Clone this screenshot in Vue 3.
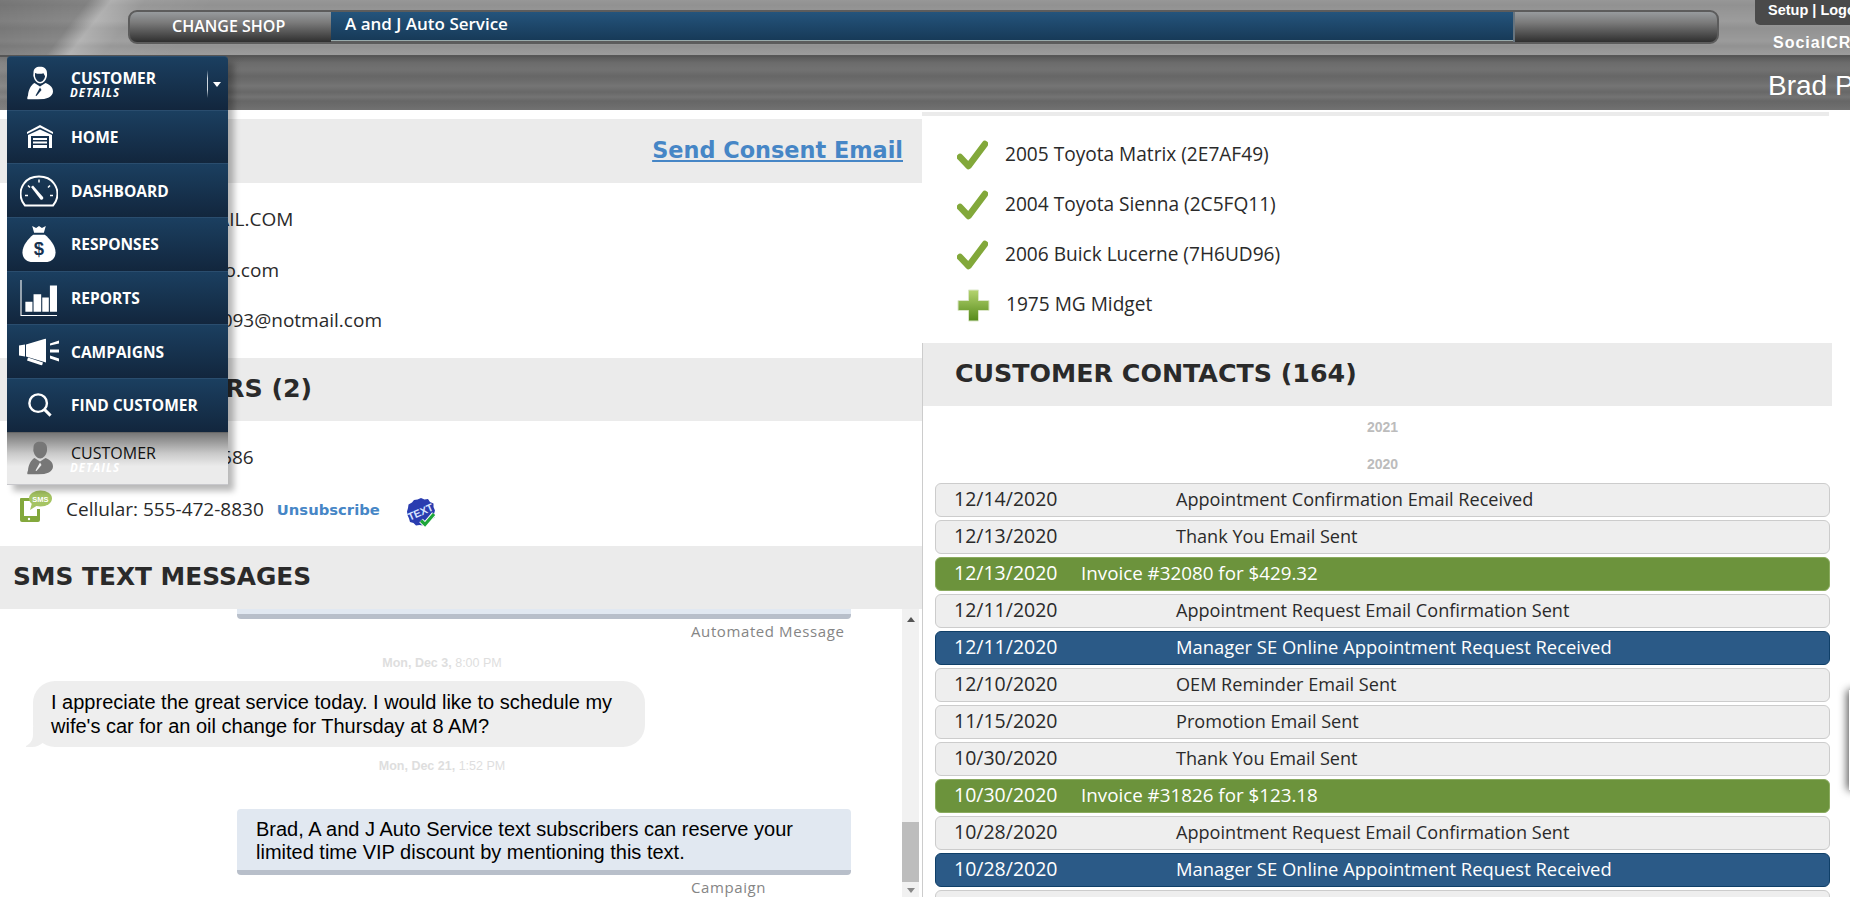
<script setup>
const menu = [
  { key: 'home', label: 'HOME' },
  { key: 'dash', label: 'DASHBOARD' },
  { key: 'bag', label: 'RESPONSES' },
  { key: 'chart', label: 'REPORTS' },
  { key: 'mega', label: 'CAMPAIGNS' },
  { key: 'find', label: 'FIND CUSTOMER' }
]
const emails = ['BRADPITT.8@GMAIL.COM', 'bradpitt.55@yahoo.com', 'bradleypitti12345093@notmail.com']
const vehicles = ['2005 Toyota Matrix (2E7AF49)', '2004 Toyota Sienna (2C5FQ11)', '2006 Buick Lucerne (7H6UD96)']
const contacts = [
  ['12/14/2020', 'Appointment Confirmation Email Received', ''],
  ['12/13/2020', 'Thank You Email Sent', ''],
  ['12/13/2020', 'Invoice #32080 for $429.32', 'green'],
  ['12/11/2020', 'Appointment Request Email Confirmation Sent', ''],
  ['12/11/2020', 'Manager SE Online Appointment Request Received', 'blue'],
  ['12/10/2020', 'OEM Reminder Email Sent', ''],
  ['11/15/2020', 'Promotion Email Sent', ''],
  ['10/30/2020', 'Thank You Email Sent', ''],
  ['10/30/2020', 'Invoice #31826 for $123.18', 'green'],
  ['10/28/2020', 'Appointment Request Email Confirmation Sent', ''],
  ['10/28/2020', 'Manager SE Online Appointment Request Received', 'blue'],
  ['10/27/2020', 'Thank You Email Sent', '']
]
</script>

<template>
  <div class="page">
    <header class="header">
      <div class="top-band">
        <div class="bar">
          <div class="shop-btn">CHANGE SHOP</div>
          <div class="shop-name">A and J Auto Service</div>
          <div class="bar-end"></div>
        </div>
        <div class="account">
          <div class="tab">Setup | Logout</div>
          <div class="brand">SocialCRM</div>
        </div>
      </div>
      <div class="low-band">Brad Pitt</div>
    </header>

    <main class="main">
      <section class="left">
        <div class="sec-head consent"><a class="consent-link">Send Consent Email</a></div>
        <div class="emails">
          <div v-for="e in emails" :key="e" class="email">{{ e }}</div>
        </div>
        <div class="sec-head title">PHONE NUMBERS (2)</div>
        <div class="phones">
          <div class="phone">Phone: 555-472-5686</div>
          <div class="phone cell">
            <svg class="sms-icon" viewBox="0 0 33 32">
              <path d="M2 8h12v3H5v15h13v-7h3v11a2 2 0 0 1-2 2H3a2 2 0 0 1-2-2V9a1 1 0 0 1 1-1z" fill="#83a83c"/>
              <circle cx="10" cy="29" r="1.2" fill="#fff"/>
              <ellipse cx="21.5" cy="8.5" rx="11.5" ry="8" fill="#a5c463"/>
              <path d="M13 13l-2 7 8-5z" fill="#a5c463"/>
              <text x="21.5" y="11.5" class="sms-txt" text-anchor="middle">SMS</text>
            </svg>
            <span>Cellular: 555-472-8830</span>
            <a class="unsub">Unsubscribe</a>
            <svg class="badge-icon" viewBox="0 0 30 30">
              <path d="M15 1l3.500 1.500L22 2l2 3 3.500 1.500L27.500 10l1.500 3.500-1 3.500.5 3.500-3 2-2 3-3.500 0L17 28.500l-3.500-.5-3.500.5-2.500-2.500-3.500-1-1-3.500L1.500 18 1 14.500 2 11l.5-3.500L6 5.500 8 3l3.500-.5z" fill="#2a3db0"/>
              <text x="14.500" y="18.500" class="badge-txt" text-anchor="middle" transform="rotate(-24 15 15)">TEXT</text>
              <path d="M15 23.500l4 4 9-10.500" fill="none" stroke="#fff" stroke-width="5"/>
              <path d="M15 23.500l4 4 9-10.500" fill="none" stroke="#1ea53a" stroke-width="3.200"/>
            </svg>
          </div>
        </div>
        <div class="sec-head title sms">SMS TEXT MESSAGES</div>
        <div class="chat-wrap">
          <div class="chat">
            <div class="stub"></div>
            <div class="label first">Automated Message</div>
            <div class="stamp s1"><b>Mon, Dec 3,</b> 8:00 PM</div>
            <div class="bubble-in">I appreciate the great service today. I would like to schedule my wife's car for an oil change for Thursday at 8 AM?</div>
            <div class="stamp s2"><b>Mon, Dec 21,</b> 1:52 PM</div>
            <div class="bubble-out">Brad, A and J Auto Service text subscribers can reserve your limited time VIP discount by mentioning this text.</div>
            <div class="label last">Campaign</div>
          </div>
          <div class="scrollbar">
            <span class="arrow up"></span>
            <span class="track"></span>
            <span class="thumb"></span>
            <span class="arrow down"></span>
          </div>
        </div>
      </section>

      <section class="right">
        <div class="strip"></div>
        <div class="vehicles">
          <div v-for="v in vehicles" :key="v" class="vehicle">
            <svg class="check" viewBox="0 0 31 30"><path d="M3 17l8.500 9L28 4" fill="none" stroke="#82a83a" stroke-width="6.500" stroke-linecap="round" stroke-linejoin="round"/></svg>
            <span class="v-name">{{ v }}</span>
          </div>
          <div class="vehicle">
            <svg class="plus" viewBox="0 0 33 33">
              <defs><linearGradient id="pg" x1="0" y1="0" x2="0" y2="1"><stop offset="0" stop-color="#b5d470"/><stop offset="1" stop-color="#558a1a"/></linearGradient></defs>
              <path d="M11.500 1h10v10.500H32v10H21.500V32h-10V21.500H1v-10h10.500z" fill="url(#pg)" stroke="#dbe6c8"/>
            </svg>
            <span class="v-name">1975 MG Midget</span>
          </div>
        </div>
        <div class="contacts">
          <div class="sec-head title contacts-title">CUSTOMER CONTACTS (164)</div>
          <div class="year y1">2021</div>
          <div class="year">2020</div>
          <div class="rows">
            <div v-for="(c, i) in contacts" :key="i" class="row" :class="c[2]">
              <span class="date">{{ c[0] }}</span>
              <span class="desc">{{ c[1] }}</span>
            </div>
          </div>
        </div>
      </section>
    </main>

    <nav class="menu">
      <div class="item customer">
        <svg class="ico person" viewBox="0 0 26 33">
          <path d="M13 0c4 0 7 2.500 7 6.500 0 1.500.3 2.500-.3 4-.8 3.500-3.500 6.500-6.500 6.500s-5.700-3-6.500-6.500C6 9 6.500 7.500 6.500 6 6.500 2.500 9 0 13 0z" fill="#fff"/>
          <path d="M8 6.500c2 1 6 1.200 8.500.3l1.600 3c-.5 3-2.700 5.700-5 5.700s-4.500-2.700-5.100-5.700z" fill="#17324f"/>
          <path d="M7.500 16.500L13 20l5.500-3.500C22 18 26 20 26 25c0 5-6 8-15 8H1c-1 0-1-2 0-4 .5-6 3-10.500 6.500-12.500z" fill="#fff"/>
          <path d="M13 21l1.500 2.500-5 6-1-.5z" fill="#17324f"/>
        </svg>
        <div class="cust-text"><span>CUSTOMER</span><em>DETAILS</em></div>
        <span class="sep"></span>
        <span class="caret"></span>
      </div>
      <div v-for="m in menu" :key="m.key" class="item">
        <svg v-if="m.key === 'home'" class="ico" viewBox="0 0 26 24">
          <path d="M13 0L26 7v2L13 2.500 0 9V7z" fill="#fff"/>
          <path d="M1 10l12-5.500L25 10v13h-3V11H4v12H1z" fill="#fff"/>
          <path d="M6 13h14v2H6zM6 16.500h14v2H6zM6 20h14v3H6z" fill="#fff"/>
        </svg>
        <svg v-else-if="m.key === 'dash'" class="ico wide" viewBox="0 0 38 33">
          <path d="M5 31h28C39 24 38.500 15 34 9 30.500 4 25 2 19 2S7.500 4 4 9C-.5 15-1 24 5 31z" fill="none" stroke="#fff" stroke-width="2"/>
          <path d="M11 12.500l2-1.500 10 11.500c1 1.500-.5 3.500-2.500 2.500z" fill="#fff"/>
          <path d="M19 5v3M8 11l2 2M30 11l-2 2M5 21h3M30 21h3" stroke="#fff" stroke-width="1.500"/>
        </svg>
        <svg v-else-if="m.key === 'bag'" class="ico wide" viewBox="0 0 34 37">
          <path d="M10 0l4 2 3-2 3 2 4-2-2 7h-10z" fill="#fff"/>
          <path d="M11 9h12c5 4 11 11 11 18 0 7-5 10-10 10H10C5 37 0 34 0 27 0 20 6 13 11 9z" fill="#fff"/>
          <text x="17" y="30" class="dollar" text-anchor="middle">$</text>
        </svg>
        <svg v-else-if="m.key === 'chart'" class="ico wide" viewBox="0 0 34 33">
          <path d="M.5 0v32.500h33" fill="none" stroke="#fff" stroke-width="1"/>
          <path d="M4.500 20h6.500v9H4.500zM12 13h7v16h-7zM20 16h6v13h-6zM27 5h6.500v24H27z" fill="#fff"/>
        </svg>
        <svg v-else-if="m.key === 'mega'" class="ico mega" viewBox="0 0 42 27">
          <path d="M0 7l6-1v12l-6-1zM7 6l20-6v24L7 18z" fill="#fff"/>
          <path d="M9 19l15 5-1 3-15-5z" fill="#fff"/>
          <path d="M31 5l9-3v3l-9 2zM31 11h9v3h-9zM31 17l9 3v3l-9-3z" fill="#fff"/>
        </svg>
        <svg v-else class="ico" viewBox="0 0 26 26">
          <circle cx="11" cy="11" r="9.500" fill="none" stroke="#fff" stroke-width="2.600"/>
          <path d="M18 18l6.500 6.500" stroke="#fff" stroke-width="3.200"/>
        </svg>
        <span class="item-label">{{ m.label }}</span>
      </div>
      <div class="item active">
        <svg class="ico person" viewBox="0 0 26 33">
          <path d="M13 0c4 0 7 2.500 7 6.500 0 1.500.3 2.500-.3 4-.8 3.500-3.500 6.500-6.500 6.500s-5.700-3-6.500-6.500C6 9 6.500 7.500 6.500 6 6.500 2.500 9 0 13 0z" fill="#777"/>
          <path d="M7.500 16.500L13 20l5.500-3.500C22 18 26 20 26 25c0 5-6 8-15 8H1c-1 0-1-2 0-4 .5-6 3-10.500 6.500-12.500z" fill="#777"/>
          <path d="M13 21l1.500 2.500-5 6-1-.5z" fill="#eee"/>
        </svg>
        <div class="cust-text"><span>CUSTOMER</span><em>DETAILS</em></div>
      </div>
    </nav>

    <div class="edge-tab"></div>
  </div>
</template>

<style scoped>
.page {
  position: relative;
  width: 1850px;
  height: 897px;
  overflow: hidden;
  background: #fff;
  font-family: "Open Sans", sans-serif;
  color: #2a2a2a;
}

/* Header */
.header {
  height: 110px;
  display: flex;
  flex-direction: column;
}
.top-band {
  height: 57px;
  display: flex;
  align-items: flex-start;
  padding-left: 128px;
  box-sizing: border-box;
  border-bottom: 2px solid #565656;
  background:
    linear-gradient(128deg, rgba(0,0,0,.2) 0, rgba(0,0,0,.12) 70px, rgba(255,255,255,.25) 88px, rgba(255,255,255,.06) 115px, transparent 170px) 0 0 / 400px 57px no-repeat,
    linear-gradient(0deg, rgba(255,255,255,.05), transparent 5px, rgba(0,0,0,.04) 9px, rgba(255,255,255,.04) 14px, transparent 19px, rgba(0,0,0,.04) 27px, rgba(255,255,255,.05) 34px, transparent 42px, rgba(0,0,0,.04) 50px, transparent),
    #979797;
}
.low-band {
  height: 53px;
  box-sizing: border-box;
  padding: 7px 0 0 1768px;
  white-space: nowrap;
  overflow: hidden;
  font: 28px/44px "Liberation Sans", sans-serif;
  color: #fff;
  background:
    linear-gradient(128deg, rgba(255,255,255,.18) 0, rgba(255,255,255,.08) 50px, rgba(0,0,0,.1) 75px, transparent 200px) 0 0 / 400px 53px no-repeat,
    linear-gradient(#5a5a5a, transparent 6px),
    linear-gradient(0deg, rgba(255,255,255,.04), transparent 4px, rgba(0,0,0,.05) 9px, rgba(255,255,255,.05) 13px, rgba(0,0,0,.04) 18px, rgba(255,255,255,.06) 24px, transparent 29px, rgba(0,0,0,.05) 34px, rgba(255,255,255,.04) 40px, transparent 47px),
    #6c6c6c;
}
.bar {
  width: 1591px;
  height: 34px;
  margin-top: 10px;
  flex: none;
  display: flex;
  box-sizing: border-box;
  border: 2px solid #5c5c5c;
  border-radius: 9px;
  overflow: hidden;
  background: #5c5c5c;
}
.shop-btn {
  width: 201px;
  flex: none;
  box-sizing: border-box;
  padding-left: 42px;
  font: 600 16px/28px "Open Sans", sans-serif;
  color: #fff;
  background: linear-gradient(#979b9e, #7b7b7b 35%, #2f2f2f);
}
.shop-name {
  width: 1182px;
  flex: none;
  box-sizing: border-box;
  padding-left: 14px;
  height: 29px;
  font: 600 17px/24px "Open Sans", sans-serif;
  color: #fff;
  background: linear-gradient(#24547c, #173a58);
  border-bottom: 1px solid #9aa;
}
.bar-end {
  flex: 1;
  border-left: 2px solid #67747e;
  background: linear-gradient(#979b9e, #7b7b7b 35%, #2f2f2f);
}
.account {
  margin-left: 36px;
  width: 95px;
  flex: none;
  overflow: hidden;
  white-space: nowrap;
}
.tab {
  height: 25px;
  box-sizing: border-box;
  padding-left: 13px;
  background: #4a4a4a;
  border-bottom-left-radius: 5px;
  font: bold 14.500px/20px "Liberation Sans", sans-serif;
  color: #fff;
}
.brand {
  padding: 9px 0 0 18px;
  font: bold 16px/18px "Liberation Sans", sans-serif;
  letter-spacing: 1px;
  color: #fff;
}

/* Layout */
.main {
  display: grid;
  grid-template-columns: 922px 928px;
  height: 787px;
}
.left {
  padding-top: 9px;
  min-width: 0;
}
.right {
  padding-top: 2px;
  min-width: 0;
}

/* Sections */
.sec-head {
  background: #ebebeb;
  height: 63px;
  box-sizing: border-box;
}
.consent {
  height: 64px;
  padding: 16px 19px 0 0;
  text-align: right;
}
.consent-link {
  font: bold 22.400px/30px "DejaVu Sans", sans-serif;
  color: #4686c6;
  text-decoration: underline;
}
.title {
  padding-left: 13px;
  font: bold 25.300px/62px "DejaVu Sans", sans-serif;
  color: #2a2a2a;
  white-space: nowrap;
}
.sms {
  font-size: 24.800px;
}
.emails {
  height: 175px;
  box-sizing: border-box;
  padding: 11px 0 0 66px;
  white-space: nowrap;
}
.email {
  height: 50.500px;
  font-size: 19px;
  line-height: 50px;
}
.phones {
  height: 125px;
  box-sizing: border-box;
  padding: 10px 0 0 66px;
}
.phone {
  height: 52px;
  font-size: 19px;
  line-height: 52px;
  position: relative;
  white-space: nowrap;
}
.cell {
  display: flex;
  align-items: center;
}
.sms-icon {
  position: absolute;
  left: -47px;
  top: 7px;
  width: 33px;
  height: 32px;
}
.sms-txt {
  font: bold 7.500px "Liberation Sans", sans-serif;
  fill: #fff;
}
.unsub {
  margin-left: 13px;
  font: bold 14.800px "DejaVu Sans", sans-serif;
  color: #4686c6;
}
.badge-icon {
  width: 30px;
  height: 30px;
  margin-left: 26px;
  margin-top: 5px;
}
.badge-txt {
  font: bold 10.500px "Liberation Sans", sans-serif;
  fill: #d8e4ff;
}

/* Chat */
.chat-wrap {
  display: flex;
  height: 288px;
  overflow: hidden;
}
.chat {
  flex: 1;
  min-width: 0;
  font-family: "Liberation Sans", sans-serif;
}
.stub {
  margin-left: 237px;
  width: 614px;
  height: 5px;
  background: #e1e8f1;
  border-bottom: 5px solid #b8bfca;
  border-radius: 0 0 4px 4px;
}
.label {
  height: 20px;
  margin-left: 691px;
  font: 15px/20px "Open Sans", sans-serif;
  letter-spacing: .6px;
  color: #858585;
}
.first { margin-top: 2px; }
.last { margin-top: 2px; }
.stamp {
  height: 16px;
  width: 884px;
  text-align: center;
  font-size: 12.500px;
  line-height: 16px;
  color: #dedede;
}
.s1 { margin-top: 14px; }
.s2 { margin-top: 11px; }
.bubble-in {
  position: relative;
  margin: 10px 0 0 33px;
  width: 612px;
  height: 66px;
  box-sizing: border-box;
  padding: 10px 18px;
  background: #eee;
  border-radius: 22px;
  font-size: 20px;
  line-height: 23.500px;
  color: #000;
}
.bubble-in::before {
  content: "";
  position: absolute;
  left: -7px;
  bottom: 0;
  width: 22px;
  height: 20px;
  background: #eee;
  border-bottom-right-radius: 16px;
}
.bubble-in::after {
  content: "";
  position: absolute;
  left: -22px;
  bottom: 0;
  width: 22px;
  height: 20px;
  background: #fff;
  border-bottom-right-radius: 12px;
}
.bubble-out {
  margin: 35px 0 0 237px;
  width: 614px;
  height: 66px;
  box-sizing: border-box;
  padding: 9px 19px;
  background: #e1e8f1;
  border-bottom: 5px solid #b8bfca;
  border-radius: 4px;
  font-size: 20px;
  line-height: 22.500px;
  color: #000;
}
.scrollbar {
  width: 17px;
  margin-right: 3px;
  flex: none;
  display: flex;
  flex-direction: column;
  align-items: center;
  background: #f1f1f1;
}
.track { flex: 1; }
.thumb {
  width: 100%;
  height: 60px;
  background: #bdbdbd;
}
.arrow {
  width: 0;
  height: 0;
  border-left: 4px solid transparent;
  border-right: 4px solid transparent;
}
.up {
  margin: 8px 0 6px;
  border-bottom: 5px solid #555;
}
.down {
  margin: 6px 0 4px;
  border-top: 5px solid #888;
}

/* Right column */
.strip {
  height: 4px;
  width: 907px;
  background: #ebebeb;
}
.vehicles {
  height: 227px;
  box-sizing: border-box;
  padding: 14px 0 0 35px;
}
.vehicle {
  height: 50px;
  display: flex;
  align-items: center;
  font-size: 19.100px;
}
.v-name {
  padding-bottom: 2px;
}
.check {
  width: 31px;
  height: 30px;
  margin-right: 17px;
}
.plus {
  width: 33px;
  height: 33px;
  margin-right: 16px;
}
.contacts {
  border-left: 1px solid #ccc;
  margin-left: 0;
  height: 554px;
}
.contacts-title {
  width: 909px;
  padding-left: 32px;
}
.year {
  width: 907px;
  box-sizing: border-box;
  padding-left: 12px;
  text-align: center;
  height: 37px;
  font: bold 14px/37px "Liberation Sans", sans-serif;
  color: #bcbcbc;
}
.y1 {
  margin-top: 3px;
}
.rows {
  margin: 0 0 0 12px;
  width: 895px;
  display: flex;
  flex-direction: column;
  gap: 3px;
}
.row {
  height: 34px;
  flex: none;
  box-sizing: border-box;
  display: flex;
  align-items: center;
  padding: 0 0 3px 18px;
  background: #eee;
  border: 1.500px solid #ccc;
  border-radius: 6px;
  font-size: 18.100px;
  white-space: nowrap;
}
.date {
  width: 222px;
  flex: none;
  font-size: 19.500px;
}
.green {
  background: #6c933c;
  border-color: #8bab60;
  color: #fff;
  font-size: 18.800px;
}
.green .date {
  width: 127px;
}
.blue {
  background: #2b5a87;
  border-color: #0f3f68;
  color: #fff;
  font-size: 18.400px;
}

/* Menu */
.menu {
  position: absolute;
  left: 7px;
  top: 56px;
  width: 221px;
  box-shadow: 6px 6px 6px rgba(0, 0, 0, .28);
  border-radius: 4px 4px 0 0;
}
.item {
  height: 53.700px;
  box-sizing: border-box;
  display: flex;
  align-items: center;
  position: relative;
  padding-left: 64px;
  border-top: 1px solid #2a4d6e;
  background: linear-gradient(#1b3f60, #12263d);
  font: 700 15.500px "Open Sans", sans-serif;
  color: #fff;
}
.customer {
  border-radius: 4px 4px 0 0;
}
.ico {
  position: absolute;
  left: 20px;
  top: 50%;
  width: 26px;
  height: 24px;
  transform: translateY(-50%);
}
.wide {
  left: 13px;
  width: 38px;
  height: 36px;
}
.mega {
  left: 12px;
  width: 42px;
  height: 27px;
}
.person {
  height: 33px;
}
.dollar {
  font: bold 19px "Liberation Sans", sans-serif;
  fill: #17324f;
}
.cust-text {
  display: flex;
  flex-direction: column;
  line-height: 16px;
  padding-top: 2px;
}
.cust-text em {
  margin-left: -1px;
  font: italic 700 11.500px/13px "Open Sans", sans-serif;
  letter-spacing: 1px;
}
.sep {
  position: absolute;
  left: 200px;
  top: 13px;
  height: 28px;
  width: 1px;
  background: linear-gradient(transparent, #cdd6de 30%, #cdd6de 70%, transparent);
}
.caret {
  position: absolute;
  left: 206px;
  top: 25px;
  width: 0;
  height: 0;
  border-left: 4.500px solid transparent;
  border-right: 4.500px solid transparent;
  border-top: 5px solid #fff;
}
.active {
  height: 53px;
  background: linear-gradient(#777, #c9c9c9 40%, #ebebeb 65%);
  border-top: 1px solid #666;
  border-bottom: 1px solid #c8c8cc;
  color: #111;
  font-size: 16px;
  font-weight: 400;
}
.active em {
  color: #fff;
  font-weight: 700;
}

.edge-tab {
  position: absolute;
  left: 1849px;
  top: 690px;
  width: 20px;
  height: 100px;
  background: #fff;
  box-shadow: -2px 0 8px rgba(0, 0, 0, .65);
}
</style>
